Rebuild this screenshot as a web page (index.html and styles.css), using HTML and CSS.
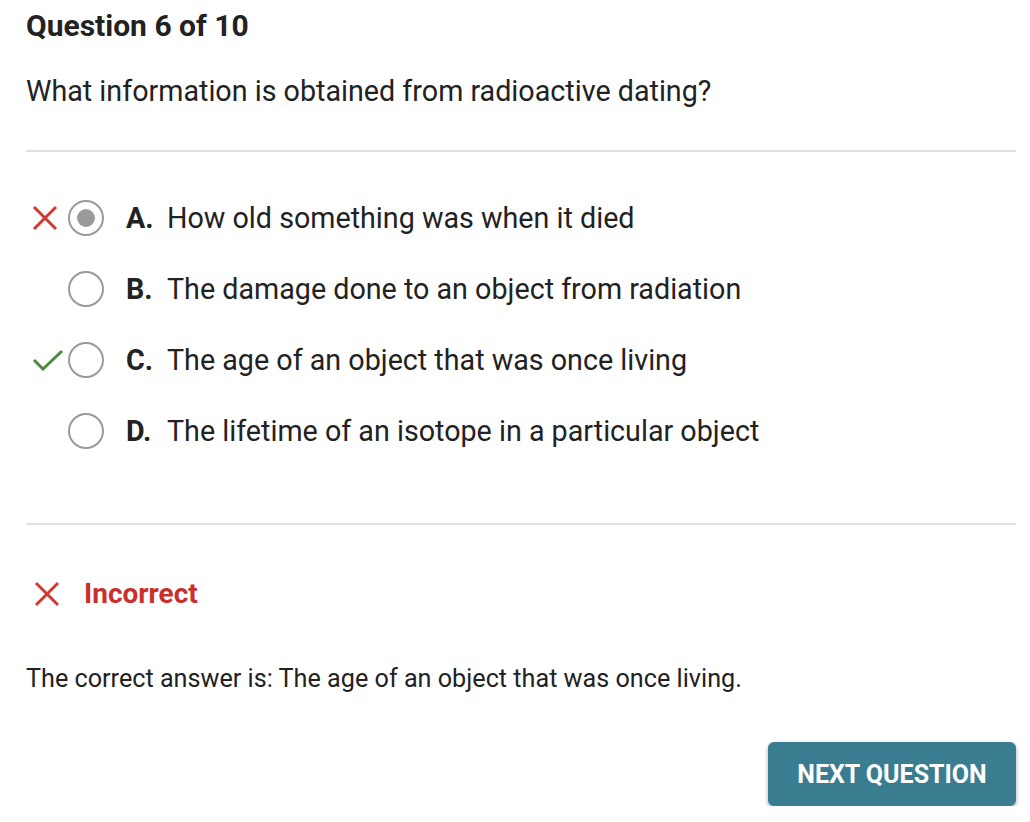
FILE: index.html
```html
<!DOCTYPE html>
<html>
<head>
<meta charset="utf-8">
<link rel="stylesheet" href="styles.css">
</head>
<body>
<div class="page">
  <h1 class="title">Question 6 of 10</h1>
  <p class="question">What information is obtained from radioactive dating?</p>
  <hr class="rule">
  <ul class="options">
    <li class="option">
      <span class="mark">
        <svg width="26" height="26" viewBox="0 0 26 26"><path d="M2 2 L24 24 M24 2 L2 24" stroke="#d0392f" stroke-width="3" fill="none"/></svg>
      </span>
      <span class="radio selected"><span class="dot"></span></span>
      <span class="letter">A.</span>
      <span class="text">How old something was when it died</span>
    </li>
    <li class="option">
      <span class="mark"></span>
      <span class="radio"></span>
      <span class="letter">B.</span>
      <span class="text">The damage done to an object from radiation</span>
    </li>
    <li class="option">
      <span class="mark">
        <svg width="32" height="26" viewBox="0 0 32 26"><path d="M2 13 L11 22 L30 4" stroke="#4a8a3c" stroke-width="3" fill="none"/></svg>
      </span>
      <span class="radio"></span>
      <span class="letter">C.</span>
      <span class="text">The age of an object that was once living</span>
    </li>
    <li class="option">
      <span class="mark"></span>
      <span class="radio"></span>
      <span class="letter">D.</span>
      <span class="text">The lifetime of an isotope in a particular object</span>
    </li>
  </ul>
  <hr class="rule">
  <div class="result">
    <svg width="26" height="26" viewBox="0 0 26 26"><path d="M2 2 L24 24 M24 2 L2 24" stroke="#d0392f" stroke-width="3" fill="none"/></svg>
    <span class="result-text">Incorrect</span>
  </div>
  <p class="answer">The correct answer is: The age of an object that was once living.</p>
  <div class="actions">
    <button class="next">NEXT QUESTION</button>
  </div>
</div>
</body>
</html>
```
FILE: styles.css
```css
html, body {
  margin: 0;
  padding: 0;
  background: #ffffff;
}
body {
  font-family: Roboto, "Liberation Sans", sans-serif;
  color: #222222;
}
.page {
  padding: 0 14px 0 26px;
}
.title {
  margin: 0;
  padding-top: 6px;
  font-size: 30px;
  font-weight: 700;
  line-height: 40px;
  color: #222;
}
.question {
  margin: 25px 0 0 0;
  font-size: 28.7px;
  line-height: 40px;
}
.rule {
  margin: 39px 0 0 0;
  border: 0;
  border-top: 2px solid #e0e0e0;
  height: 0;
}
.options {
  list-style: none;
  margin: 0;
  padding: 48px 0 35px 0;
  display: flex;
  flex-direction: column;
  gap: 35px;
}
.option {
  display: flex;
  align-items: center;
  height: 36px;
  font-size: 28.7px;
}
.mark {
  width: 42px;
  display: flex;
  align-items: center;
  justify-content: flex-start;
  margin-left: 6px;
  margin-right: -6px;
}
.radio {
  width: 32px;
  height: 32px;
  border: 2px solid #9a9a9a;
  border-radius: 50%;
  display: flex;
  align-items: center;
  justify-content: center;
  box-sizing: content-box;
}
.dot {
  width: 18px;
  height: 18px;
  border-radius: 50%;
  background: #9a9a9a;
}
.letter {
  font-weight: 700;
  margin-left: 22px;
  width: 41px;
}
.text {
  color: #222;
}
.result {
  display: flex;
  align-items: center;
  gap: 24px;
  margin-top: 52px;
  padding-left: 8px;
}
.result-text {
  color: #c9302c;
  font-weight: 700;
  font-size: 28px;
}
.answer {
  margin: 54px 0 0 0;
  font-size: 25.2px;
  line-height: 30px;
}
.actions {
  display: flex;
  justify-content: flex-end;
  margin-top: 48px;
}
.next {
  width: 248px;
  height: 64px;
  border: 0;
  border-radius: 6px;
  background: #3a7d90;
  color: #ffffff;
  font-family: Roboto, "Liberation Sans", sans-serif;
  font-weight: 700;
  font-size: 25px;
  box-shadow: 0 2px 4px rgba(0,0,0,0.35);
}
```
